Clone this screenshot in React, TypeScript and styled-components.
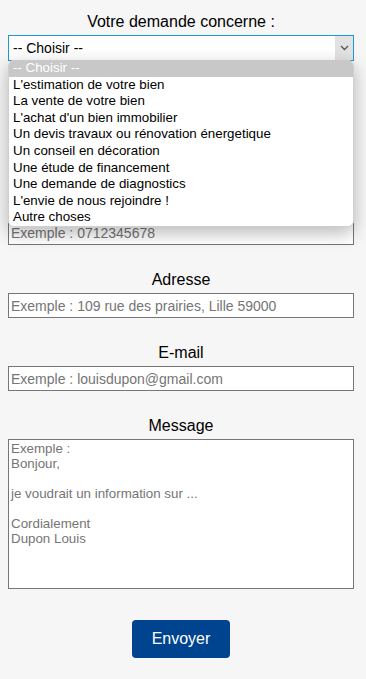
import React from 'react'
import styled, { createGlobalStyle } from 'styled-components'

const GlobalStyle = createGlobalStyle`
  html, body {
    margin: 0;
    padding: 0;
    background: #f6f6f6;
  }
  body {
    font-family: 'Liberation Sans', Arial, sans-serif;
    color: #000;
  }
`

const Form = styled.form`
  position: relative;
  width: 346px;
  margin-left: 8px;
  padding-top: 13px;
  padding-bottom: 21px;
  display: flex;
  flex-direction: column;
`

const Field = styled.div<{ space: number }>`
  display: flex;
  flex-direction: column;
  margin-top: ${props => props.space}px;
`

const Label = styled.label`
  display: block;
  text-align: center;
  font-size: 16px;
  line-height: 18px;
  margin-bottom: 4px;
`

const Input = styled.input`
  box-sizing: border-box;
  width: 100%;
  height: 25px;
  margin: 0;
  padding: 0 2px;
  border: 1px solid #767676;
  background: #fff;
  font-family: 'Liberation Sans', Arial, sans-serif;
  font-size: 14px;
  color: #000;
  outline: none;

  &::placeholder {
    color: #757575;
  }
`

const TextArea = styled.textarea`
  box-sizing: border-box;
  width: 100%;
  height: 150px;
  margin: 0;
  padding: 1px 2px;
  border: 1px solid #767676;
  background: #fff;
  font-family: 'Liberation Sans', Arial, sans-serif;
  font-size: 13.33px;
  line-height: 15px;
  resize: none;
  outline: none;

  &::placeholder {
    color: #757575;
  }
`

const SelectBox = styled.div`
  box-sizing: border-box;
  height: 26px;
  border: 1px solid #1e98dc;
  background: #fff;
  display: flex;
  align-items: stretch;
`

const SelectValue = styled.div`
  flex: 1;
  display: flex;
  align-items: center;
  padding-left: 4px;
  font-size: 14px;
`

const SelectArrow = styled.div`
  width: 18px;
  background: #e2e2e2;
  display: flex;
  align-items: center;
  justify-content: center;
`

const OptionList = styled.ul`
  position: absolute;
  left: 0;
  top: 60px;
  box-sizing: border-box;
  width: 346px;
  margin: 0;
  padding: 0;
  list-style: none;
  background: #fff;
  border: 1px solid #cfcfcf;
  border-top: none;
  border-radius: 6px;
  overflow: hidden;
  box-shadow: 0 6px 18px rgba(0, 0, 0, 0.28);
  z-index: 2;
`

const Option = styled.li<{ active?: boolean }>`
  height: 16.6px;
  line-height: 16px;
  padding: 0 4px;
  font-size: 13.33px;
  white-space: nowrap;
  background: ${props => props.active ? '#c8c8c8' : '#fff'};
  color: ${props => props.active ? '#fff' : '#000'};
`

const ButtonRow = styled.div`
  display: flex;
  justify-content: center;
  margin-top: 31px;
`

const SendButton = styled.button`
  width: 98px;
  height: 38px;
  border: none;
  border-radius: 4px;
  background: #00448f;
  color: #fff;
  font-family: 'Liberation Sans', Arial, sans-serif;
  font-size: 16px;
  cursor: pointer;
`

const options = [
  '-- Choisir --',
  "L'estimation de votre bien",
  'La vente de votre bien',
  "L'achat d'un bien immobilier",
  'Un devis travaux ou rénovation énergetique',
  'Un conseil en décoration',
  'Une étude de financement',
  'Une demande de diagnostics',
  "L'envie de nous rejoindre !",
  'Autre choses',
]

export default function App() {
  return (
    <>
      <GlobalStyle />
      <Form onSubmit={e => e.preventDefault()}>
        <Field space={0}>
          <Label>Votre demande concerne :</Label>
          <SelectBox>
            <SelectValue>-- Choisir --</SelectValue>
            <SelectArrow>
              <svg width="9" height="6" viewBox="0 0 9 6">
                <path d="M1 1 L4.5 4.5 L8 1" fill="none" stroke="#555" strokeWidth="1.3" />
              </svg>
            </SelectArrow>
          </SelectBox>
        </Field>

        {/* open native list, drawn over the fields below */}
        <OptionList>
          {options.map((o, i) => (
            <Option key={o} active={i === 0}>{o}</Option>
          ))}
        </OptionList>

        <Field space={26}>
          <Label>Nom et prénom</Label>
          <Input placeholder="Exemple : Dupon Louis" />
        </Field>

        <Field space={64}>
          <Label>Téléphone</Label>
          <Input placeholder="Exemple : 0712345678" />
        </Field>

        <Field space={26}>
          <Label>Adresse</Label>
          <Input placeholder="Exemple : 109 rue des prairies, Lille 59000" />
        </Field>

        <Field space={26}>
          <Label>E-mail</Label>
          <Input placeholder="Exemple : louisdupon@gmail.com" />
        </Field>

        <Field space={26}>
          <Label>Message</Label>
          <TextArea
            placeholder={'Exemple :\nBonjour,\n\nje voudrait un information sur ...\n\nCordialement\nDupon Louis'}
          />
        </Field>

        <ButtonRow>
          <SendButton type="submit">Envoyer</SendButton>
        </ButtonRow>
      </Form>
    </>
  )
}
